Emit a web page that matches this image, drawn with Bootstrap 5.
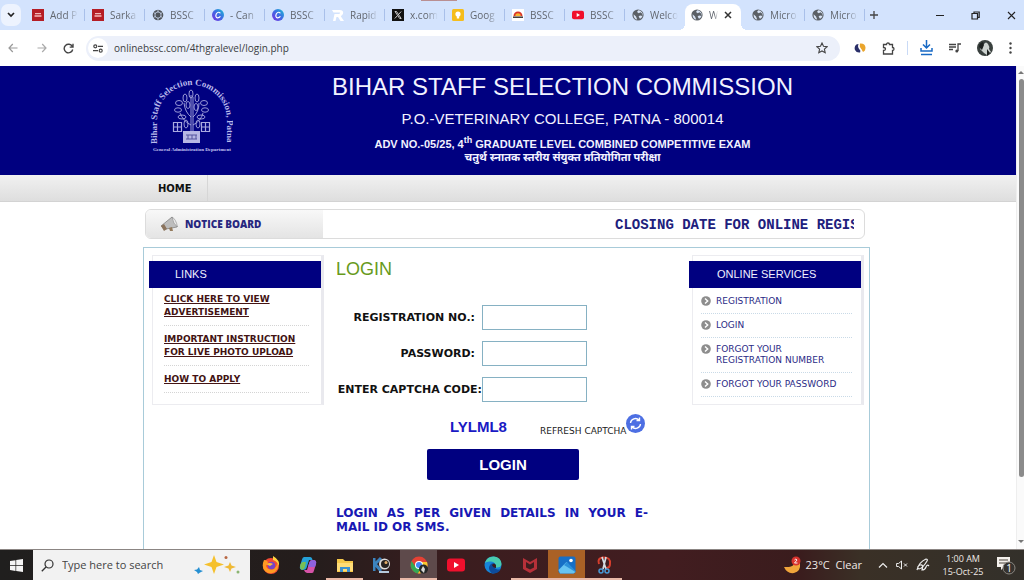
<!DOCTYPE html>
<html lang="en">
<head>
<meta charset="utf-8">
<meta name="viewport" content="width=device-width, initial-scale=1">
<title>Bihar Staff Selection Commission - Login</title>
<link href="https://cdn.jsdelivr.net/npm/bootstrap@5.3.0/dist/css/bootstrap.min.css" rel="stylesheet">
<style>
:root{--navy:#000080;--ui:"Open Sans","Noto Sans",sans-serif;--ver:"DejaVu Sans",sans-serif;--ari:"Liberation Sans",Arial,sans-serif}
body{font-family:var(--ver);font-size:9px;color:#111;background:#fff}
button{background:none;border:0;padding:0;color:inherit}
svg{display:block;flex:none}
/* browser chrome */
.tabstrip{height:30px;background:#d3e3fd;font:10px/14px var(--ui);color:#62676f}
.tab-search{width:20px;height:22px;background:#edf3fe;border-radius:7px;margin:4px 4px 0 1px}
.tab{width:60px;height:30px;padding:0 7px;gap:6px;position:relative;color:inherit;text-decoration:none}
.tab svg{width:12px;height:12px}
.tab:not(.current):not(.before)::after{content:"";width:1px;height:12px;background:#a9c0ea;position:absolute;right:0}
.tab span{flex:1;min-width:0;overflow:hidden;white-space:nowrap;-webkit-mask-image:linear-gradient(90deg,#000 60%,transparent);mask-image:linear-gradient(90deg,#000 60%,transparent)}
.tab.current{width:56px;background:#fff;height:26px;align-self:end;border-radius:8px 8px 0 0;padding:0 9px 4px 6px;margin-right:4px}
.tab.current::before,.tab.current::after{content:"";position:absolute;bottom:0;width:6px;height:6px}
.tab.current::before{left:-6px;background:radial-gradient(circle at 0 0,transparent 6px,#fff 6px)}
.tab.current::after{right:-6px;background:radial-gradient(circle at 100% 0,transparent 6px,#fff 6px)}
.handle{position:absolute;left:421px;top:0;width:36px;height:1px;background:#b98f92}
.window-controls{gap:27px;padding-right:8px}
.toolbar{height:36px;padding:0 12px 0 6px;color:#474747}
.nav-btn{width:27px;height:27px;display:flex;align-items:center;justify-content:center}
.nav-btn.back{width:14px}
.address{height:25px;border-radius:13px;background:#ecf0fa;margin-right:14px}
.site-info{width:20px;height:20px;border-radius:50%;background:#fff;margin:0 6px 0 2px}
.address input{border:0;background:none;font:10px/16px var(--ui);color:#3b3d42;padding:0;outline:0}
.divider{width:1px;height:14px;background:#c9daf6;margin:0 12px}
/* page */
.viewport{min-height:0}
.page{overflow:hidden;min-width:0}
.masthead{background:var(--navy);color:#f2f2ff;height:109px;font-family:var(--ari)}
.frame{width:730px;max-width:100%;margin:0 auto;padding-right:3px}
.masthead-text{padding:7px 0 0 22px}
.site-name{font-size:24px;line-height:28px;margin:0}
.site-addr{font-size:15px;line-height:20px;margin:8px 0}
.exam{font-size:11px;line-height:14px;font-weight:700;margin:0}
.exam sup{font-size:9px;line-height:0;top:-5px}
.exam-hi{font:700 11px/14px "Noto Sans Devanagari","Lohit Devanagari",FreeSans,sans-serif;margin:0}
.menu{height:27px;background:linear-gradient(#f1f1f1,#dedede);border-bottom:1px solid #d3d3d3}
.menu a{font:700 10px/28px var(--ver);height:26px;color:#111;text-decoration:none;padding:0 15px;border-right:1px solid #d6d6d6;display:inline-block}
.notice{height:30px;margin:7px 5px 8px 2px;border:1px solid #dcdcdc;border-radius:6px;background:#fff;overflow:hidden}
.notice-title{width:177px;padding-left:14px;gap:6px;background:linear-gradient(#f8f8f8,#e4e4e4);color:#27277f;font:700 10px/14px var(--ui)}
.ticker{margin:0 10px 0 292px;font:700 14px/30px "Liberation Mono",monospace;color:#20207c;overflow:hidden;white-space:nowrap}
.board{border:1px solid #a8cbd9;border-bottom:0;padding:7px 5px 0 5px;flex:1}
.panel{width:175px;height:150px;position:relative}
.panel-body{border:1px solid #ececf0;border-right:3px solid #e9e9ee;margin-left:3px;height:100%;padding:32px 12px 0 11px}
.panel h2{position:absolute;left:0;top:6px;width:172px;height:27px;background:var(--navy);color:#f0f0ff;font:11px/26px var(--ari);margin:0;padding-left:26px}
.services{margin-left:auto}
.services h2{padding-left:28px}
.links a{display:block;font:700 9px/13px var(--ver);color:#431313;padding:7px 0 6px;border-bottom:1px dotted #d4d4d4}
.links a:first-child{padding-top:5px}
.services .panel-body{padding:34px 9px 0 8px}
.services a{display:flex;gap:5px;font:9px/11px var(--ver);color:#2b2b86;text-decoration:none;padding:6px 0;border-bottom:1px dotted #c9dae7}
.login{width:312px;margin-left:12px}
.login h1{font:18px/24px var(--ari);color:#679a1b;margin:2px 0 24px}
.field{height:25px;margin-bottom:11px}
.field label{width:146px;text-align:right;font:700 11px/16px var(--ver);white-space:nowrap}
.field label.spaced{padding-right:7px}
.field input{width:105px;height:25px;border:1px solid #86b1c3;background:#fff;padding:2px 5px}
.captcha{height:24px;padding-left:114px}
.captcha strong{font:700 15px/20px var(--ari);color:#1a1ac4;width:90px}
.captcha button{font:9px/12px var(--ver);color:#222;white-space:nowrap}
.submit{width:152px;height:31px;background:var(--navy);color:#fff;font:700 15px/31px var(--ari);border-radius:2px;margin:12px 0 26px 91px;display:block}
.tip{font:700 12px/14px var(--ver);color:#1818b4;text-align:justify;margin:0}
.scroller{width:8px;background:#fafafa;border-left:1px solid #eee;padding:3px 0}
.thumb{width:5px;background:#8b8b8b;border-radius:3px;flex:85}
.rest{flex:13}
/* desktop taskbar */
.taskbar{height:31px;background:linear-gradient(90deg,#201f1e 0,#241d1c 30%,#3b1d1f 45%,#421d20 65%,#3a1c1d 78%,#3a3026 84%,#33302a 100%);border-top:1px solid #8b8583;color:#efeae6;font-family:var(--ui)}
.start{width:33px}
.search{width:217px;background:#f2f2f2;padding-left:8px;gap:8px}
.search input{border:0;background:none;font:11px/16px var(--ui);color:#444;padding:0;width:122px;outline:0}
.search input::placeholder{color:#444;opacity:1}
.apps{padding-left:2px}
.app{width:37px;height:30px;display:flex;align-items:center;justify-content:center}
.app svg{width:18px;height:18px}
.open{box-shadow:inset 0 -2px #e9b9a8}
.focus-app{background:#5e4a4b}
.alert-app{background:#aa6126}
.tray{font-size:11px;line-height:14px;gap:8px;padding-right:8px}
.weather{gap:5px;margin-right:8px}
.clock{font-size:9px;line-height:13px;width:50px}
</style>
</head>
<body class="vh-100 d-flex flex-column overflow-hidden">
<svg width="0" height="0" class="position-absolute" aria-hidden="true">
  <symbol id="globe" viewBox="0 0 12 12"><circle cx="6" cy="6" r="5.6" fill="#5b6066"/><path d="M1.6 5.2 4 7.4 5.2 10.6C3 10.4 1.4 8.4 1.6 5.2ZM6.2 1.2 5 3 6.8 4.2 8.4 3.2 10 4.6 10.4 7 8 6.4 6.6 7.6 8 9.8C10 9 11 7 10.6 4.6 9.8 2.6 8.4 1.4 6.2 1.2Z" fill="#d9e4f6"/></symbol>
  <symbol id="redbox" viewBox="0 0 12 12"><path d="M0 0h12v12H0z" fill="#b51d25"/><path d="M3 4.6h6M2.5 7h7" stroke="#f5b9b9" stroke-width="1.4"/></symbol>
  <symbol id="canva" viewBox="0 0 12 12"><defs><linearGradient id="cg" x1="0" y1="1" x2="1" y2="0"><stop stop-color="#7b2be0"/><stop offset=".55" stop-color="#3b6fe4"/><stop offset="1" stop-color="#16c1cf"/></linearGradient></defs><circle cx="6" cy="6" r="6" fill="url(#cg)"/><path d="M8.2 4.4C8 2.8 5.6 2.8 4.4 4.8S4 9 5.8 8.8 8 8 8.4 7.2" fill="none" stroke="#fff" stroke-width="1.2"/></symbol>
  <symbol id="tube" viewBox="0 0 18 14"><rect width="18" height="13" y=".5" rx="3" fill="#f0102d"/><path d="m7 4 5 3-5 3z" fill="#fff"/></symbol>
  <symbol id="bullet" viewBox="0 0 10 10"><circle cx="5" cy="5" r="4.8" fill="#8d8d8d"/><path d="m4 2.500 2.700 2.500L4 7.500" fill="none" stroke="#fff" stroke-width="1.400"/></symbol>
</svg>

<header class="tabstrip d-flex align-items-center flex-shrink-0 position-relative">
  <i class="handle"></i>
  <button class="tab-search d-flex align-items-center justify-content-center mt-0" aria-label="Search tabs"><svg width="8" height="6" viewBox="0 0 8 6"><path d="m1 1 3 3 3-3" fill="none" stroke="#222" stroke-width="1.7"/></svg></button>
  <a href="#" class="tab d-flex align-items-center"><svg><use href="#redbox"/></svg><span>Add P</span></a>
  <a href="#" class="tab d-flex align-items-center"><svg><use href="#redbox"/></svg><span>Sarka</span></a>
  <a href="#" class="tab d-flex align-items-center"><svg viewBox="0 0 12 12"><circle cx="6" cy="6" r="5.300" fill="#50555b"/><path d="M6 2.600 9 4.300v3.400L6 9.400 3 7.700V4.300zM6 .8v3M10.500 3.500 8 5M10.500 8.500 8 7M6 11V8.500M1.500 8.500 4 7M1.500 3.500 4 5" fill="none" stroke="#c5d2e8" stroke-width=".8"/></svg><span>BSSC</span></a>
  <a href="#" class="tab d-flex align-items-center"><svg><use href="#canva"/></svg><span>- Can</span></a>
  <a href="#" class="tab d-flex align-items-center"><svg><use href="#canva"/></svg><span>BSSC</span></a>
  <a href="#" class="tab d-flex align-items-center"><svg viewBox="0 0 12 12"><path d="M0 1h7.500Q12 1 11 5L8.800 7.300 12 12H8.500L6 8H4.500L3.500 12H1L2.500 5h5L8 3.500H1.500z" fill="#fff"/></svg><span>Rapid</span></a>
  <a href="#" class="tab d-flex align-items-center"><svg viewBox="0 0 12 12"><path d="M0 0h12v12H0z" fill="#111"/><path d="M3 2.500h1.500L9.200 9.500H7.700zM9.200 2.500 6.600 5.400M5.400 6.700 2.800 9.500" stroke="#ddd" fill="none" stroke-width=".9"/></svg><span>x.com</span></a>
  <a href="#" class="tab d-flex align-items-center"><svg viewBox="0 0 12 12"><rect width="12" height="12" rx="1.500" fill="#f5bd1c"/><circle cx="6" cy="5" r="2.600" fill="#fff"/><path d="M4.800 7h2.400v2.500H4.800z" fill="#fff"/></svg><span>Goog</span></a>
  <a href="#" class="tab d-flex align-items-center"><svg viewBox="0 0 12 12"><path d="M0 0h12v12H0z" fill="#fff"/><path d="M1.500 7a4.500 4.500 0 0 1 9 0z" fill="#d9342b"/><path d="M3.300 7a2.700 2.700 0 0 1 5.400 0z" fill="#f6b733"/><path d="M1 8.200h10" stroke="#3c3434" stroke-width="1.500"/></svg><span>BSSC</span></a>
  <a href="#" class="tab d-flex align-items-center"><svg><use href="#tube"/></svg><span>BSSC</span></a>
  <a href="#" class="tab before d-flex align-items-center"><svg><use href="#globe"/></svg><span>Welco</span></a>
  <div class="tab current d-flex align-items-center"><svg><use href="#globe"/></svg><span>W</span><button aria-label="Close tab"><svg style="width:8px;height:8px" viewBox="0 0 8 8"><path d="m1 1 6 6M7 1 1 7" stroke="#333" stroke-width="1.500"/></svg></button></div>
  <a href="#" class="tab d-flex align-items-center"><svg><use href="#globe"/></svg><span>Micro</span></a>
  <a href="#" class="tab d-flex align-items-center"><svg><use href="#globe"/></svg><span>Micro</span></a>
  <button class="ms-1" aria-label="New tab"><svg width="10" height="10" viewBox="0 0 10 10"><path d="M5 1v8M1 5h8" stroke="#444" stroke-width="1.300"/></svg></button>
  <div class="window-controls d-flex align-items-center ms-auto">
    <button aria-label="Minimize"><svg width="9" height="9" viewBox="0 0 9 9"><path d="M1 4.500h8" stroke="#222"/></svg></button>
    <button aria-label="Restore"><svg width="9" height="9" viewBox="0 0 9 9"><path d="M1 2.500h5.500V8H1zM3 2.500V1h5.200v5.300H6.500" fill="none" stroke="#222" stroke-width="1.200"/></svg></button>
    <button aria-label="Close"><svg width="9" height="9" viewBox="0 0 9 9"><path d="m1 1 7 7M8 1 1 8" stroke="#222" stroke-width="1.100"/></svg></button>
  </div>
</header>

<div class="toolbar d-flex align-items-center flex-shrink-0 bg-white">
  <button class="nav-btn back" aria-label="Back"><svg width="10" height="10" viewBox="0 0 10 10"><path d="M9.500 5H1M4.800 1 1 5l3.800 4" fill="none" stroke="#999" stroke-width="1.200"/></svg></button>
  <button class="nav-btn ms-2" aria-label="Forward"><svg width="10" height="10" viewBox="0 0 10 10"><path d="M.5 5H9M5.200 1 9 5 5.200 9" fill="none" stroke="#aaa" stroke-width="1.200"/></svg></button>
  <button class="nav-btn" aria-label="Reload"><svg width="11" height="11" viewBox="0 0 11 11"><path d="M9.300 3.500A4.300 4.300 0 1 0 9.700 6.500M10 .8v3.300H6.700" fill="none" stroke="#444" stroke-width="1.400"/></svg></button>
  <div class="address d-flex align-items-center flex-grow-1 ms-1 pe-2">
    <button class="site-info d-flex align-items-center justify-content-center flex-shrink-0" aria-label="Site information"><svg width="10" height="9" viewBox="0 0 10 9"><circle cx="2.300" cy="2.300" r="1.500" fill="none" stroke="#444" stroke-width="1.200"/><circle cx="7.700" cy="6.700" r="1.500" fill="none" stroke="#444" stroke-width="1.200"/><path d="M5 2.300h5M0 6.700h5" stroke="#444" stroke-width="1.200"/></svg></button>
    <input class="flex-grow-1" type="text" aria-label="Address" value="onlinebssc.com/4thgralevel/login.php">
    <button class="me-1" aria-label="Bookmark"><svg width="12" height="12" viewBox="0 0 12 12"><path d="m6 1 1.500 3.300 3.600.4-2.700 2.400.8 3.600L6 8.900l-3.200 1.800.8-3.600L.9 4.700l3.600-.4z" fill="none" stroke="#444" stroke-width="1.100"/></svg></button>
  </div>
  <button aria-label="Extension"><svg width="12" height="12" viewBox="0 0 12 12"><path d="M5 2C1.500 1.500 0 5 1 8q1.500 3 5 2.500C8.500 8 2 7 5 2Z" fill="#2a2f69"/><path d="M6 1.500q5-.5 5.500 4Q11.500 9 9 10 8 8 6.500 6 5 4 6 1.500Z" fill="#eaa52c"/><path d="M5 2q-1 3 1 4.500T7 10" stroke="#fff" fill="none"/></svg></button>
  <button class="ms-3" aria-label="Extensions"><svg width="13" height="13" viewBox="0 0 13 13"><path d="M1.500 2.500H4.500Q4.500 1 6 1t1.500 1.500h3V5.500Q12 5.500 12 7t-1.500 1.500V12H1.500V8.500Q3.500 8.500 3.500 7T1.500 5.500z" fill="none" stroke="#444" stroke-width="1.300"/></svg></button>
  <i class="divider"></i>
  <button aria-label="Downloads"><svg width="13" height="16" viewBox="0 0 13 16"><path d="M6.500 0v7M3 4.500 6.500 8 10 4.500M1 8v3h11V8" fill="none" stroke="#1769c5" stroke-width="1.500"/><path d="M1 14.500h11" stroke="#1769c5" stroke-width="1.500"/></svg></button>
  <button class="ms-3" aria-label="Media"><svg width="12" height="10" viewBox="0 0 12 10"><path d="M0 1.500h7M0 4h7M0 6.500h4M9 8V1h3" fill="none" stroke="#444" stroke-width="1.300"/><circle cx="7.800" cy="8" r="1.500" fill="#444"/></svg></button>
  <button class="mx-3" aria-label="Profile"><svg width="16" height="16" viewBox="0 0 16 16"><circle cx="8" cy="8" r="8" fill="#39403e"/><path d="M7 4q2-3 4 0 2 3 1 5l2 3-4 3-3-2-4-4 2-4z" fill="#ccd2cf"/><path d="M2 7q0-4 4-5l1 3-2 5zM10 9l3 4-3 3z" fill="#1c201f"/></svg></button>
  <button aria-label="Menu"><svg width="3" height="12" viewBox="0 0 3 12"><g fill="#444"><circle cx="1.500" cy="1.500" r="1.200"/><circle cx="1.500" cy="6" r="1.200"/><circle cx="1.500" cy="10.500" r="1.200"/></g></svg></button>
</div>

<div class="viewport d-flex flex-grow-1">
  <main class="page d-flex flex-column flex-grow-1">
    <div class="masthead flex-shrink-0"><div class="frame d-flex">
      <svg class="ms-1 mt-2" width="86" height="84" viewBox="146 75 86 84" aria-label="Bihar Staff Selection Commission, Patna">
        <path id="arc" d="M156 145V121A35 35 0 0 1 226 121V146" fill="none"/>
        <text font-family="Liberation Serif" font-size="9" font-weight="700" fill="#b9b9ec"><textPath href="#arc">Bihar Staff Selection Commission, Patna</textPath></text>
        <text x="191" y="152" text-anchor="middle" font-family="Liberation Serif" font-size="5" font-weight="700" fill="#c4c4f2">General Administration Department</text>
        <g fill="none" stroke="#a9a9e0" stroke-width=".9"><path d="M190 132V96M192 132V98M190 126q-8-4-11-12M192 126q8-4 10-12M190 118q-6-5-7-14M192 118q6-5 6-14"/>
        <ellipse cx="190" cy="95" rx="2" ry="4"/><ellipse cx="184" cy="99" rx="2" ry="4"/><ellipse cx="196" cy="99" rx="2" ry="4"/><ellipse cx="178" cy="104" rx="3.500" ry="2.500"/><ellipse cx="203" cy="104" rx="3.500" ry="2.500"/><ellipse cx="177" cy="111" rx="3.500" ry="2.200"/><ellipse cx="204" cy="111" rx="3.500" ry="2.200"/><ellipse cx="187" cy="106" rx="2" ry="3.500"/><ellipse cx="195" cy="108" rx="2" ry="3.500"/><ellipse cx="181" cy="118" rx="4" ry="2"/><ellipse cx="200" cy="118" rx="4" ry="2"/><ellipse cx="185" cy="125" rx="2" ry="4"/><ellipse cx="197" cy="125" rx="2" ry="4"/>
        <path d="M172.500 123.500h8v9h-8zM200.500 123.500h8v9h-8zM172 128h9M200 128h9M176.500 123v10M204.500 123v10" stroke-width="1.200"/></g>
        <path d="M182 132h17v12h-17z" fill="#b7b7e4"/><path d="M185 136h11M185 140h11M187 136v4M191 136v4M195 136v4" stroke="#55559f" fill="none"/>
      </svg>
      <div class="masthead-text text-center flex-grow-1">
        <p class="site-name">BIHAR STAFF SELECTION COMMISSION</p>
        <p class="site-addr">P.O.-VETERINARY COLLEGE, PATNA - 800014</p>
        <p class="exam">ADV NO.-05/25, 4<sup>th</sup> GRADUATE LEVEL COMBINED COMPETITIVE EXAM</p>
        <p class="exam-hi" lang="hi">चतुर्थ स्नातक स्तरीय संयुक्त प्रतियोगिता परीक्षा</p>
      </div>
    </div></div>
    <nav class="menu flex-shrink-0"><div class="frame"><a href="#">HOME</a></div></nav>
    <div class="frame d-flex flex-column flex-grow-1">
      <section class="notice d-flex flex-shrink-0">
        <div class="notice-title d-flex align-items-center flex-shrink-0"><svg width="19" height="16" viewBox="0 0 19 16"><path d="M1 10 12 1l5 10-11 2z" fill="#bdbdbd" stroke="#777" stroke-width=".7"/><path d="M12 1q4 2 5.500 10Q13 8 12 1Z" fill="#e9e9e9" stroke="#888" stroke-width=".6"/><path d="m1 10 3-2 3 5-3 2z" fill="#8b735c"/><path d="m9 12 1 3h3l-1-4" fill="#947b5d"/></svg><strong>NOTICE BOARD</strong></div>
        <div class="ticker flex-grow-1">CLOSING DATE FOR ONLINE REGIS</div>
      </section>
      <div class="board d-flex align-items-start">
        <section class="panel links flex-shrink-0"><h2>LINKS</h2><div class="panel-body">
          <a href="#">CLICK HERE TO VIEW ADVERTISEMENT</a><a href="#">IMPORTANT INSTRUCTION FOR LIVE PHOTO UPLOAD</a><a href="#">HOW TO APPLY</a></div></section>
        <form class="login">
          <h1>LOGIN</h1>
          <div class="field d-flex align-items-center"><label class="spaced" for="reg">REGISTRATION NO.:</label><input id="reg" type="text"></div>
          <div class="field d-flex align-items-center"><label class="spaced" for="pw">PASSWORD:</label><input id="pw" type="password"></div>
          <div class="field d-flex align-items-center"><label for="cap">ENTER CAPTCHA CODE:</label><input id="cap" type="text"></div>
          <div class="captcha d-flex align-items-end"><strong>LYLML8</strong><button type="button" class="d-flex align-items-end">REFRESH CAPTCHA<svg class="mb-1" width="19" height="19" viewBox="0 0 19 19"><circle cx="9.500" cy="9.500" r="9.500" fill="#4d6fe3"/><path d="M4.500 9a5 5 0 0 1 8.500-3M14.500 10a5 5 0 0 1-8.500 3M13.500 3.500v3h-3M5.500 15.500v-3h3" fill="none" stroke="#fff" stroke-width="1.400"/></svg></button></div>
          <button type="submit" class="submit">LOGIN</button>
          <p class="tip">LOGIN AS PER GIVEN DETAILS IN YOUR E-<wbr>MAIL&nbsp;ID OR SMS.</p>
        </form>
        <section class="panel services flex-shrink-0"><h2>ONLINE SERVICES</h2><div class="panel-body">
          <a href="#"><svg width="10" height="10"><use href="#bullet"/></svg>REGISTRATION</a><a href="#"><svg width="10" height="10"><use href="#bullet"/></svg>LOGIN</a><a href="#"><svg width="10" height="10"><use href="#bullet"/></svg><span>FORGOT YOUR<br>REGISTRATION NUMBER</span></a><a href="#"><svg width="10" height="10"><use href="#bullet"/></svg>FORGOT YOUR PASSWORD</a></div></section>
      </div>
    </div>
  </main>
  <div class="scroller d-flex flex-column align-items-end flex-shrink-0">
    <svg width="6" height="10" viewBox="0 0 6 10"><path d="m0 5 3-3 3 3z" fill="#777"/></svg><i class="thumb"></i><i class="rest"></i><svg width="6" height="8" viewBox="0 0 6 8"><path d="m0 2 3 3 3-3z" fill="#777"/></svg>
  </div>
</div>

<footer class="taskbar d-flex align-items-stretch flex-shrink-0">
  <button class="start d-flex align-items-center justify-content-center" aria-label="Start"><svg width="13" height="13" viewBox="0 0 13 13"><path d="m0 2 5.500-.8v5H0zM6.200 1 13 0v6.200H6.200zM0 6.900h5.500v5L0 11zM6.200 6.900H13V13l-6.800-1z" fill="#f4f4f4"/></svg></button>
  <label class="search d-flex align-items-center flex-shrink-0"><svg width="13" height="13" viewBox="0 0 13 13"><circle cx="8" cy="5" r="4" fill="none" stroke="#333" stroke-width="1.200"/><path d="M5 8 .8 12.200" stroke="#333" stroke-width="1.300"/></svg><input type="text" placeholder="Type here to search" aria-label="Search">
    <svg width="48" height="22" viewBox="-4 0 48 22"><path d="m18 1 2.500 7L28 10.500 20.500 13 18 20l-2.500-7L8 10.500 15.500 8z" fill="#f5c02c"/><path d="m34 8 1.500 3.500L40 13l-4.500 1.500L34 18l-1.500-3.500L28 13l4.500-1.500z" fill="#efb935"/><path d="m3 13 1 3 3 1-3 1.500L2 20l-1-2-3-2 3-.5z" fill="#258fd2"/><circle cx="30" cy="3.500" r="1.500" fill="#b86743"/><circle cx="42" cy="18" r="1.500" fill="#8bb572"/></svg></label>
  <div class="apps d-flex">
    <button class="app" aria-label="Firefox"><svg viewBox="0 0 18 18"><circle cx="9" cy="10" r="8" fill="#f34a35"/><path d="M11 0q7 4 6 10-2-5-6-6z" fill="#ffd23d"/><path d="M2 4q3 0 4 2l-2 4q2 5 8 3 4-3 3-7 3 6-2 10-6 3-10-1T2 4Z" fill="#ff9a22"/><circle cx="9.500" cy="9.500" r="3.700" fill="#7645c6"/><path d="M4 8q4-2 7 0l-3 2z" fill="#ffbf35"/></svg></button>
    <button class="app" aria-label="Copilot"><svg viewBox="0 0 18 18"><path d="M5 1h6q2 0 2.500 3H10L7.500 12Q7 14 4 14 0 14 1 10L3 3.500Q3.500 1 5 1Z" fill="#25a1d8"/><path d="M1 10q1-4 3-4h3l-1 5q-1 3-3 3-2-1-2-4Z" fill="#78bf54"/><path d="M13 17H8q-2 0-3-3h3l2.500-8Q11 4 14 4q4 0 3 4l-2 6.500Q14.500 17 13 17Z" fill="#d653a8"/><path d="M14 4q4 0 3 4l-1 3H9l1.500-5Q11 4 14 4Z" fill="#8f62df"/></svg></button>
    <button class="app open" aria-label="File Explorer"><svg viewBox="0 0 18 18"><path d="M1 3h6l2 2h8v11H1z" fill="#f5c74a"/><path d="M1 7h16v8H1z" fill="#ffdc77"/><path d="M4 16v-5h10v5h-3v-3H7v3z" fill="#3c91d0"/></svg></button>
    <button class="app" aria-label="Camera app"><svg viewBox="0 0 18 18"><path d="M1 2v13M8 2 2 8l6 7" fill="none" stroke="#3c83be" stroke-width="3"/><circle cx="11.500" cy="8" r="5.500" fill="#ddd"/><circle cx="12" cy="8" r="4" fill="#28221f"/><circle cx="13" cy="6.500" r="1.500" fill="#e4ad68"/><path d="M6 16h10" stroke="#b4c9dc" stroke-width="2"/></svg></button>
    <button class="app open focus-app" aria-label="Chrome"><svg viewBox="0 0 18 18"><circle cx="9" cy="9" r="8.500" fill="#e44134"/><path d="M1.600 5A8.500 8.500 0 0 0 8 17.400L11 12 5 10z" fill="#35a854"/><path d="M17 6a8.500 8.500 0 0 1-9 11.400L12 10V6z" fill="#f8c82e"/><circle cx="9" cy="9" r="4" fill="#fff"/><circle cx="9" cy="9" r="3" fill="#4286f4"/><circle cx="13.500" cy="13" r="4.500" fill="#242726"/><path d="m13 10 2 3-1 4-3-3z" fill="#d7d9d7"/></svg></button>
    <button class="app" aria-label="YouTube"><svg viewBox="0 0 18 14"><use href="#tube"/></svg></button>
    <button class="app" aria-label="Edge"><svg viewBox="0 0 18 18"><circle cx="9" cy="9" r="8.500" fill="#1684d8"/><path d="M1 7Q3 .5 10 .6 17 1.500 17.500 8 17 12 12 11.500 12 6 7 5.500 3 5 1 7Z" fill="#49cbb0"/><path d="M8 17.500Q3 13 6 9q2-3 5-1-2 3 1 5 3 1 5 0-3 5-9 4.500Z" fill="#0d4b9c"/><path d="M8 9q2-3 4 0v3q-3 0-4-3Z" fill="#3b1d1f"/></svg></button>
    <button class="app open" aria-label="McAfee"><svg viewBox="0 0 18 18"><path d="m2 2 7 4 7-4v11l-7 4-7-4zM5 6v5.500l4 2 4-2V6L9 8.500z" fill="#b73039" fill-rule="evenodd"/></svg></button>
    <button class="app open alert-app" aria-label="Photos"><svg viewBox="0 0 18 18"><rect x=".5" y=".5" width="17" height="17" rx="2" fill="#176fc6"/><path d="m.500 14 8-8 9 10-2 1.500H2z" fill="#67c4f2"/><path d="m6 9 3-3 8.500 9v1z" fill="#2b8fda"/><circle cx="13" cy="4.500" r="1.800" fill="#fff"/></svg></button>
    <button class="app open" aria-label="Snipping Tool"><svg viewBox="0 0 18 18"><path d="M4 8Q2 2 8 1.500 16 1 15 8 15 12 11 12" fill="none" stroke="#d63e2d" stroke-width="2"/><path d="m7 1 4 12M11 1 8 13" stroke="#d4dde4" stroke-width="1.700"/><circle cx="6" cy="15" r="2" fill="none" stroke="#4999d5" stroke-width="1.500"/><circle cx="12" cy="15" r="2" fill="none" stroke="#4999d5" stroke-width="1.500"/></svg></button>
  </div>
  <div class="tray d-flex align-items-center ms-auto">
    <div class="weather d-flex align-items-center"><svg width="18" height="19" viewBox="0 0 18 19"><path d="M10 2q5 10-9 9 3 7 10 6 7-2 6-9Q16 3 10 2Z" fill="#f0a53b"/><circle cx="13" cy="5" r="4.500" fill="#d8332e"/><path d="M11.500 4Q13 2 14 4l-2.500 3h3" fill="none" stroke="#fff" stroke-width=".9"/></svg>
    <span class="text-nowrap">23°C&nbsp; Clear</span></div>
    <svg width="10" height="7" viewBox="0 0 10 7"><path d="m1 5.500 4-4 4 4" fill="none" stroke="#eee" stroke-width="1.200"/></svg>
    <svg width="12" height="10" viewBox="0 0 12 10"><path d="M.6 3.500h2L5.500 1v8L2.600 6.500h-2zM8 3.500l3 3M11 3.500l-3 3" fill="none" stroke="#eee"/></svg>
    <svg width="14" height="14" viewBox="0 0 14 14"><path d="M1 12Q3 4 10 1q2 0 1 2-4 7-8 8Q0 9 4 7q4-1 2 5 3 0 4-3t3-1" fill="none" stroke="#eee" stroke-width="1.200"/></svg>
    <div class="clock text-center text-nowrap">1:00 AM<br>15-Oct-25</div>
    <svg width="20" height="20" viewBox="0 0 20 20"><path d="M1 2h13v10H8l-3 3v-3H1z" fill="#f4f0ec"/><path d="M3 5h9M3 8h9" stroke="#4a443c"/><circle cx="13" cy="13" r="6" fill="#36332f" stroke="#8b8781"/><text x="13" y="16.500" font-family="Open Sans" font-size="10" text-anchor="middle" fill="#fff">1</text></svg>
  </div>
</footer>
<script src="https://cdn.jsdelivr.net/npm/bootstrap@5.3.0/dist/js/bootstrap.bundle.min.js"></script>
</body>
</html>
